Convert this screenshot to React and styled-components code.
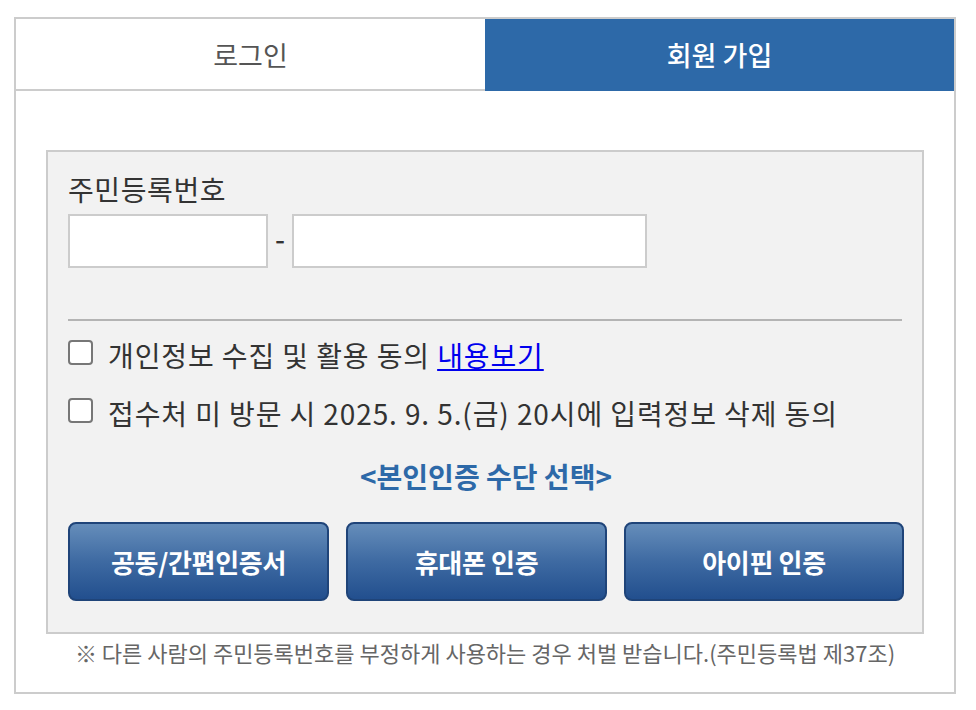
import React, { useState } from 'react';
import styled, { createGlobalStyle } from 'styled-components';

const GlobalStyle = createGlobalStyle`
  * {
    box-sizing: border-box;
  }
  body {
    margin: 0;
    padding: 17px 0 0 14px;
    background: #ffffff;
    font-family: 'Noto Sans CJK KR', 'Noto Sans', sans-serif;
    color: #333333;
  }
`;

function App() {
  const [tab, setTab] = useState('join');
  const [agree, setAgree] = useState({ privacy: false, delete: false });

  const toggle = (key) => setAgree((prev) => ({ ...prev, [key]: !prev[key] }));

  return (
    <>
      <GlobalStyle />
      <Wrapper>
        <Tabs>
          <Tab $active={tab === 'login'} onClick={() => setTab('login')}>
            로그인
          </Tab>
          <Tab $active={tab === 'join'} onClick={() => setTab('join')}>
            회원 가입
          </Tab>
        </Tabs>
        <Body>
          <Panel>
            <Label htmlFor="rrn1">주민등록번호</Label>
            <InputRow>
              <RrnInput id="rrn1" $width="200px" maxLength={6} />
              <Dash>-</Dash>
              <RrnInput $width="355px" type="password" maxLength={7} />
            </InputRow>
            <Divider />
            <CheckList>
              <CheckRow>
                <CheckBox
                  type="checkbox"
                  checked={agree.privacy}
                  onChange={() => toggle('privacy')}
                />
                <span>
                  개인정보 수집 및 활용 동의 <ViewLink href="#">내용보기</ViewLink>
                </span>
              </CheckRow>
              <CheckRow>
                <CheckBox
                  type="checkbox"
                  checked={agree.delete}
                  onChange={() => toggle('delete')}
                />
                <span>접수처 미 방문 시 2025. 9. 5.(금) 20시에 입력정보 삭제 동의</span>
              </CheckRow>
            </CheckList>
            <MethodTitle>&lt;본인인증 수단 선택&gt;</MethodTitle>
            <ButtonGrid>
              <AuthButton>공동/간편인증서</AuthButton>
              <AuthButton>휴대폰 인증</AuthButton>
              <AuthButton>아이핀 인증</AuthButton>
            </ButtonGrid>
          </Panel>
          <Notice>
            ※ 다른 사람의 주민등록번호를 부정하게 사용하는 경우 처벌 받습니다.(주민등록법 제37조)
          </Notice>
        </Body>
      </Wrapper>
    </>
  );
}

const Wrapper = styled.div`
  width: 942px;
  height: 677px;
  border: 2px solid #cccccc;
  background: #ffffff;
`;

const Tabs = styled.div`
  display: grid;
  grid-template-columns: 1fr 1fr;
`;

const Tab = styled.button`
  height: 72px;
  border: none;
  border-bottom: 2px solid ${({ $active }) => ($active ? '#2d69a8' : '#cccccc')};
  background: ${({ $active }) => ($active ? '#2d69a8' : '#ffffff')};
  color: ${({ $active }) => ($active ? '#ffffff' : '#555555')};
  font-family: inherit;
  font-size: 27px;
  font-weight: ${({ $active }) => ($active ? 500 : 400)};
  padding: 0;
  cursor: pointer;
`;

const Body = styled.div`
  padding: 59px 30px 0;
`;

const Panel = styled.div`
  border: 2px solid #cccccc;
  background: #f2f2f2;
  padding: 20px 18px 31px 20px;
`;

const Label = styled.label`
  display: block;
  font-size: 28px;
  line-height: 34px;
  letter-spacing: 0.6px;
  color: #333333;
`;

const InputRow = styled.div`
  display: flex;
  align-items: center;
  margin-top: 8px;
`;

const RrnInput = styled.input`
  width: ${({ $width }) => $width};
  height: 54px;
  border: 2px solid #cccccc;
  background: #ffffff;
  font-size: 22px;
  padding: 0 10px;
  outline: none;
`;

const Dash = styled.span`
  width: 24px;
  padding-bottom: 6px;
  text-align: center;
  font-size: 28px;
  font-weight: 500;
  line-height: 1;
  color: #333333;
`;

const Divider = styled.hr`
  margin: 51px 2px 0 0;
  border: none;
  border-top: 2px solid #b4b4b4;
`;

const CheckList = styled.div`
  display: flex;
  flex-direction: column;
  gap: 24px;
  margin-top: 17px;
`;

const CheckRow = styled.label`
  display: flex;
  align-items: center;
  gap: 15px;
  font-size: 28px;
  line-height: 34px;
  letter-spacing: 0.9px;
  color: #333333;
  cursor: pointer;
`;

const CheckBox = styled.input`
  appearance: none;
  width: 25px;
  height: 25px;
  margin: 0 0 6px;
  border: 2px solid #777777;
  border-radius: 4px;
  background: #ffffff;
  flex-shrink: 0;
  cursor: pointer;
  &:checked {
    background: #2d69a8;
    border-color: #2d69a8;
  }
`;

const ViewLink = styled.a`
  color: #0000ee;
  text-decoration: underline;
`;

const MethodTitle = styled.div`
  margin-top: 29px;
  text-align: center;
  font-size: 28px;
  line-height: 34px;
  font-weight: 700;
  color: #2d69a8;
`;

const ButtonGrid = styled.div`
  display: grid;
  grid-template-columns: 261px 261px 1fr;
  gap: 17px;
  margin-top: 29px;
`;

const AuthButton = styled.button`
  height: 79px;
  border: 2px solid #1f4479;
  border-radius: 8px;
  background: linear-gradient(to bottom, #658dba 0%, #3e6aa2 50%, #224f8e 100%);
  color: #ffffff;
  font-family: inherit;
  font-size: 26px;
  font-weight: 700;
  letter-spacing: -0.3px;
  cursor: pointer;
`;

const Notice = styled.p`
  margin: 3px 0 0;
  text-align: center;
  font-size: 22px;
  line-height: 30px;
  letter-spacing: 0;
  color: #666666;
`;

export default App;
